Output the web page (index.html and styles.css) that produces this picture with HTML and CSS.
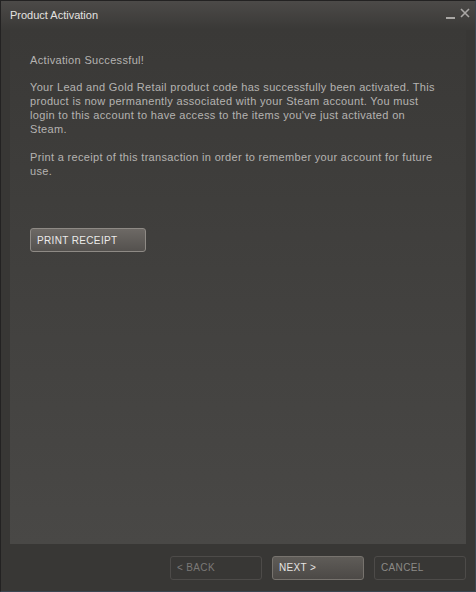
FILE: index.html
```html
<!DOCTYPE html>
<html>
<head>
<meta charset="utf-8">
<link rel="stylesheet" href="styles.css">
</head>
<body>
<div class="window">
  <div class="titlebar">
    <span class="title">Product Activation</span>
    <div class="controls">
      <span class="min"></span>
      <svg class="close" width="10" height="10" viewBox="0 0 10 10"><path d="M1 1 L9 9 M9 1 L1 9" stroke="#a9a7a5" stroke-width="1.6" fill="none"/></svg>
    </div>
  </div>
  <div class="panel">
    <p class="head">Activation Successful!</p>
    <p class="para">Your Lead and Gold Retail product code has successfully been activated. This product is now permanently associated with your Steam account. You must login to this account to have access to the items you've just activated on Steam.</p>
    <p class="para">Print a receipt of this transaction in order to remember your account for future use.</p>
    <button class="btn btn-print">PRINT RECEIPT</button>
  </div>
  <div class="footer">
    <button class="btn btn-nav btn-disabled">&lt; BACK</button>
    <button class="btn btn-nav btn-primary">NEXT &gt;</button>
    <button class="btn btn-nav btn-cancel">CANCEL</button>
  </div>
</div>
</body>
</html>
```
FILE: styles.css
```css
html, body {
  margin: 0;
  padding: 0;
  background: #383634;
}
.window {
  width: 476px;
  height: 592px;
  box-sizing: border-box;
  display: flex;
  flex-direction: column;
  background: #383735;
  border-left: 1px solid #232222;
  border-top: 1px solid #232222;
  border-right: 1px solid #3b4652;
  border-bottom: 1px solid #3b4652;
  font-family: "Liberation Sans", Arial, sans-serif;
  font-size: 11px;
  color: #b5b3b1;
}
.titlebar {
  height: 29px;
  flex: none;
  display: flex;
  align-items: flex-start;
  justify-content: space-between;
  padding: 0 5px 0 9px;
  background: linear-gradient(#4c4a48, #3a3937 28px);
}
.title {
  color: #e4e2e0;
  font-size: 11px;
  line-height: 14px;
  margin-top: 7px;
}
.controls {
  display: flex;
  align-items: flex-start;
  gap: 5px;
  margin-top: 7px;
}
.min {
  display: block;
  width: 9px;
  height: 2px;
  margin-top: 9px;
  background: #a9a7a5;
}
.close {
  display: block;
}
.panel {
  flex: 1;
  margin: 0 9px;
  padding: 23px 30px 0 20px;
  background: linear-gradient(#3a3937, #494846);
}
.panel p {
  margin: 0;
  line-height: 14px;
  letter-spacing: 0.33px;
}
.head {
  margin-bottom: 13px !important;
}
.para {
  margin-bottom: 14px !important;
}
.btn {
  font-family: "Liberation Sans", Arial, sans-serif;
  font-size: 10px;
  letter-spacing: 0.35px;
  text-align: left;
  box-sizing: border-box;
  border-radius: 3px;
  padding: 0 0 0 6px;
  height: 24px;
  cursor: default;
}
.btn-print {
  margin-top: 36px;
  width: 116px;
  color: #ecebea;
  border: 1px solid #8e8a85;
  background: linear-gradient(#6d6965, #54514e);
}
.footer {
  height: 47px;
  flex: none;
  display: flex;
  justify-content: flex-end;
  align-items: center;
  gap: 10px;
  padding: 0 9px 0 0;
}
.btn-nav {
  width: 92px;
}
.btn-disabled {
  color: #7b7977;
  background: transparent;
  border: 1px solid #4d4b49;
}
.btn-primary {
  color: #e6e4e2;
  background: linear-gradient(#5f5c58, #4c4946);
  border: 1px solid #77736e;
}
.btn-cancel {
  color: #8c8a87;
  background: transparent;
  border: 1px solid #4d4b49;
}
```
